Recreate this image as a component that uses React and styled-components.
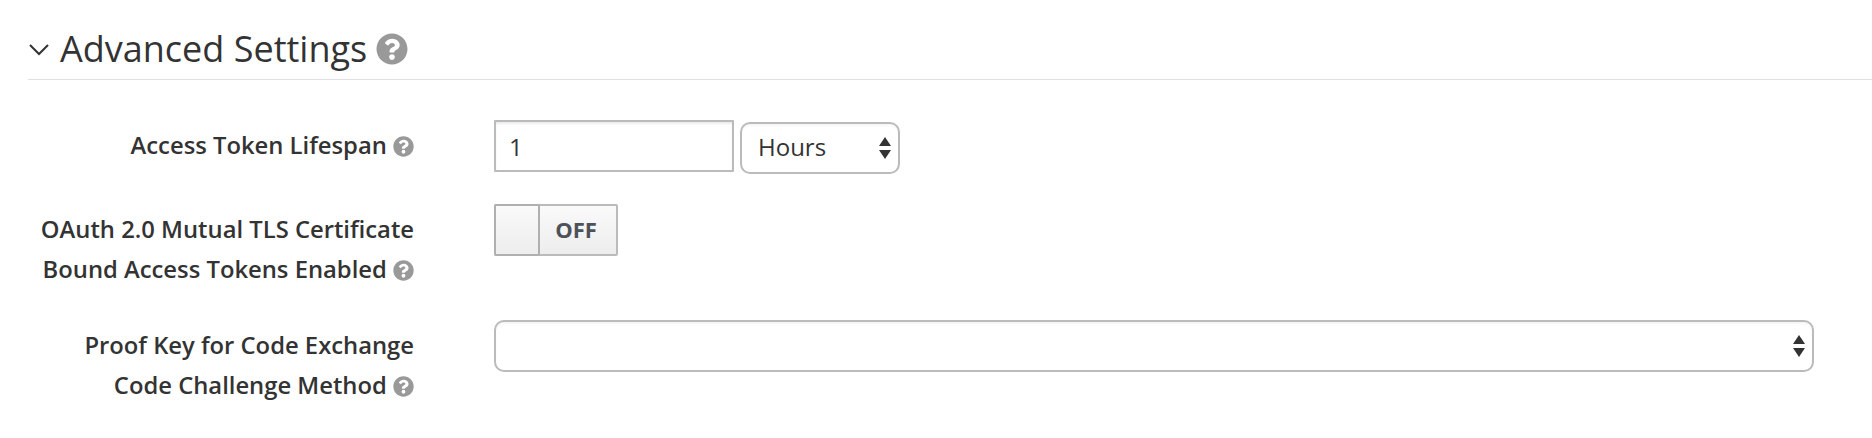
import React from "react";
import styled, { createGlobalStyle } from "styled-components";
import { FaQuestionCircle } from "react-icons/fa";

const GlobalStyle = createGlobalStyle`
    html, body {
        margin: 0;
        background: #fff;
        font-family: "Open Sans", "Liberation Sans", sans-serif;
        color: #333;
    }
`;

const Page = styled.div`
    width: 1872px;
    height: 438px;
    padding: 24px 0 0 28px;
    box-sizing: border-box;
    overflow: hidden;
`;

const Legend = styled.div`
    display: flex;
    align-items: center;
    height: 50px;
    padding-bottom: 5px;
    border-bottom: 1px solid #e0e0e0;
    margin-bottom: 40px;
`;

const Chevron = styled.svg`
    width: 22px;
    height: 14px;
    margin: 2px 10px 0 0;
    fill: none;
    stroke: #333;
    stroke-width: 2;
`;

const Title = styled.span`
    font-size: 36px;
    line-height: 48px;
    font-weight: 400;
    color: #333;
    margin-right: 9px;
`;

const HelpIcon = styled(FaQuestionCircle)`
    color: #999;
    display: inline-block;
    width: ${(p) => p.$size}px;
    height: ${(p) => p.$size}px;
    vertical-align: ${(p) => p.$shift || 0}px;
`;

const Row = styled.div`
    display: grid;
    grid-template-columns: 386px 1fr;
    column-gap: 80px;
    margin-bottom: ${(p) => p.$gap}px;
`;

const Label = styled.label`
    font-size: 23.8px;
    line-height: 40px;
    font-weight: 600;
    text-align: right;
    color: #333;
    padding-top: ${(p) => p.$top || 0}px;
`;

const Controls = styled.div`
    display: flex;
    align-items: flex-start;
    gap: 6px;
`;

const TextInput = styled.input`
    width: 240px;
    height: 52px;
    box-sizing: border-box;
    border: 2px solid #bbb;
    border-radius: 1px;
    padding: 0 13px;
    font: 400 24px "Open Sans", sans-serif;
    color: #333;
    box-shadow: inset 0 2px 2px rgba(3, 3, 3, 0.08);
    outline: none;
`;

const SelectWrap = styled.div`
    position: relative;
    width: ${(p) => p.$width}px;
    height: 52px;
    margin-top: 2px;
`;

const Select = styled.select`
    appearance: none;
    width: 100%;
    height: 100%;
    box-sizing: border-box;
    border: 2px solid #bbb;
    border-radius: 10px;
    padding: 0 16px 3px;
    background: #fff;
    font: 400 24px "Open Sans", sans-serif;
    color: #333;
    box-shadow: inset 0 2px 2px rgba(3, 3, 3, 0.04);
    outline: none;
`;

const Arrows = styled.svg`
    position: absolute;
    right: 9px;
    top: 14px;
    width: 12px;
    height: 24px;
    fill: #333;
    pointer-events: none;
`;

const Switch = styled.div`
    display: flex;
    width: 124px;
    height: 52px;
    box-sizing: border-box;
    border: 2px solid #bbb;
    border-radius: 2px;
    background: linear-gradient(#fafafa, #ededed);
`;

const Knob = styled.div`
    width: 42px;
    margin: -2px 0 -2px -2px;
    border: 2px solid #b0b0b0;
    border-radius: 2px;
    background: linear-gradient(#fafafa, #ededed);
`;

const SwitchText = styled.span`
    flex: 1;
    padding-right: 4px;
    text-align: center;
    font-size: 22px;
    line-height: 46px;
    font-weight: 700;
    color: #4d5258;
`;

const Updown = () => (
    <Arrows viewBox="0 0 12 24">
        <path d="M6 1 L12 10 L0 10 Z" />
        <path d="M0 14 L12 14 L6 23 Z" />
    </Arrows>
);

export default function App() {
    return (
        <Page>
            <GlobalStyle />
            <Legend>
                <Chevron viewBox="0 0 22 14">
                    <path d="M2 2 L11 11 L20 2" />
                </Chevron>
                <Title>Advanced Settings</Title>
                <HelpIcon $size={32} />
            </Legend>

            <Row $gap={30}>
                <Label $top={5}>
                    Access Token Lifespan <HelpIcon $size={21} $shift={-3} />
                </Label>
                <Controls>
                    <TextInput defaultValue="1" />
                    <SelectWrap $width={160}>
                        <Select defaultValue="Hours">
                            <option>Minutes</option>
                            <option>Hours</option>
                            <option>Days</option>
                        </Select>
                        <Updown />
                    </SelectWrap>
                </Controls>
            </Row>

            <Row $gap={29}>
                <Label $top={5}>
                    OAuth 2.0 Mutual TLS Certificate
                    <br />
                    Bound Access Tokens Enabled <HelpIcon $size={21} $shift={-3} />
                </Label>
                <Controls>
                    <Switch>
                        <Knob />
                        <SwitchText>OFF</SwitchText>
                    </Switch>
                </Controls>
            </Row>

            <Row $gap={0}>
                <Label $top={7}>
                    Proof Key for Code Exchange
                    <br />
                    Code Challenge Method <HelpIcon $size={21} $shift={-3} />
                </Label>
                <Controls>
                    <SelectWrap $width={1320}>
                        <Select defaultValue="">
                            <option value=""></option>
                            <option>plain</option>
                            <option>S256</option>
                        </Select>
                        <Updown />
                    </SelectWrap>
                </Controls>
            </Row>
        </Page>
    );
}
